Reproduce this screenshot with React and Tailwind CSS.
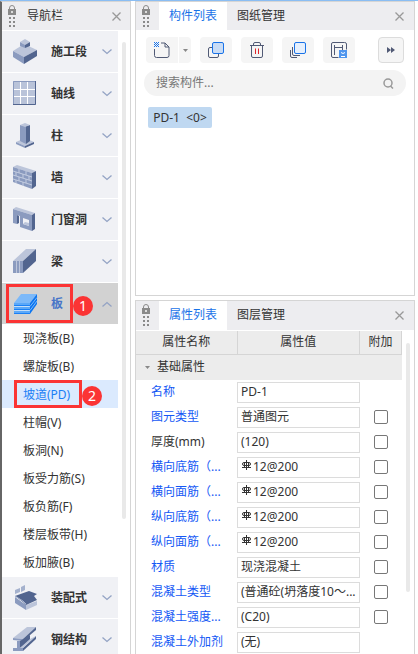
import { useState } from "react";
import clsx from "clsx";

const SectionIcon = () => (
  <>
    <path d="M0 12 11 5 24 11 11 18Z" fill="#bcc5da" />
    <path d="M0 12 11 18V25L0 18Z" fill="#8b9bbf" />
    <path d="M11 18 24 11V17L11 25Z" fill="#52658f" />
    <path d="M7 3 12 0 17 3 12 6Z" fill="#bcc5da" />
    <path d="M7 3 12 6V9L7 7Z" fill="#8b9bbf" />
    <path d="M12 6 17 3V7L12 9Z" fill="#52658f" />
  </>
);

const GridIcon = () => (
  <>
    <path d="M0 0H23V24H0Z" fill="#b9c3d9" />
    <path d="M0.500 24V0.500H23" fill="none" stroke="#8b9bbf" />
    <path d="M0 23.500H22.500V0" fill="none" stroke="#52658f" />
    <path d="M7.500 1V23M14.500 1V23M1 8.500H22M1 15.500H22" stroke="#fff" />
  </>
);

const ColumnIcon = () => (
  <>
    <path d="M3 19 12 15 21 19 12 23Z" fill="#bcc5da" />
    <path d="M3 19 12 23V25L3 21Z" fill="#8b9bbf" />
    <path d="M12 23 21 19V21L12 25Z" fill="#52658f" />
    <path d="M7 2 13 3V21L7 18Z" fill="#8b9bbf" />
    <path d="M13 3 17 2V18L13 21Z" fill="#52658f" />
    <path d="M7 2 12 0 17 2 12 4Z" fill="#bcc5da" />
  </>
);

const WallIcon = () => (
  <>
    <path d="M0 2 4 0 23 6 19 8Z" fill="#bcc5da" />
    <path d="M19 8 23 6V21L19 24Z" fill="#52658f" />
    <path d="M0 2 19 8V24L0 17Z" fill="#8b9bbf" />
    <path
      d="M0 6 19 12M0 10 19 16M0 14 19 20M6 4V8M13 6V10M3 7V11M10 9V13M16 11V15M6 12V16M13 14V18M3 15V18M10 17V21"
      fill="none"
      stroke="#c3cce0"
    />
  </>
);

const DoorIcon = () => (
  <>
    <path d="M0 2 3 0 22 6 19 8Z" fill="#bcc5da" />
    <path d="M19 8 22 6V22L19 24Z" fill="#52658f" />
    <path
      fillRule="evenodd"
      d="M0 2 19 8V24L7 20V9L4 8V17L0 16ZM10 11V17L16 19V13Z"
      fill="#8b9bbf"
    />
    <path d="M4 8 6 9V16L4 17Z" fill="#52658f" />
    <path d="M10 17 12 15 16 16V19Z" fill="#bcc5da" />
  </>
);

const BeamIcon = () => (
  <>
    <path d="M0 12 13 0H23L10 12Z" fill="#bcc5da" />
    <path d="M10 12 23 0V12L10 24Z" fill="#52658f" />
    <path d="M0 12H10V24H0Z" fill="#8b9bbf" />
    <path d="M3.500 12V24M6.500 12V24" stroke="#bcc5da" />
  </>
);

const SlabIcon = () => (
  <>
    <path d="M1 12 8 3H24L17 12Z" fill="#7cb9f9" />
    <path d="M17 12 24 3V13L17 23Z" fill="#0a74f0" />
    <path d="M1 12H17V23H1Z" fill="#5ba8f8" />
    <path d="M1 15.500H17M1 19.500H17" stroke="#c3def9" />
    <path d="M17 15.500 24 6.500M17 19.500 24 10" stroke="#7cb9f9" />
    <path d="M1 14.500H17M1 18.500H17M1 22.500H17" stroke="#1a80f5" />
  </>
);

const PrefabIcon = () => (
  <>
    <path d="M2 12 13 20V25L2 18Z" fill="#8b9bbf" />
    <path d="M13 20 24 16V20L13 25Z" fill="#bcc5da" />
    <path d="M2 11 16 6 24 9 21 11 24 15 13 20 10 17Z" fill="#52658f" />
    <path d="M2 5 7 3V7L2 9Z" fill="#a4b1cd" />
    <path d="M8 2 12 0V5L8 7Z" fill="#a4b1cd" />
    <path d="M2 11 10 16 13 19" fill="none" stroke="#a4b1cd" />
  </>
);

const SteelIcon = () => (
  <>
    <path d="M0 11 14 0H23L10 12Z" fill="#bcc5da" />
    <path d="M0 11 10 12V14L0 13Z" fill="#8b9bbf" />
    <path d="M10 12 23 0V3L10 14Z" fill="#52658f" />
    <path d="M4 14H7V21H4Z" fill="#8b9bbf" />
    <path d="M7 14 17 8V13L7 21Z" fill="#52658f" />
    <path d="M0 21H10V24H0Z" fill="#8b9bbf" />
    <path d="M10 21 23 9V12L10 24Z" fill="#52658f" />
    <path d="M7 21 17 12 23 9 10 21Z" fill="#bcc5da" />
  </>
);

const slabTypes = [
  "现浇板(B)",
  "螺旋板(B)",
  "坡道(PD)",
  "柱帽(V)",
  "板洞(N)",
  "板受力筋(S)",
  "板负筋(F)",
  "楼层板带(H)",
  "板加腋(B)",
];

const categories = [
  { name: "施工段", icon: SectionIcon },
  { name: "轴线", icon: GridIcon },
  { name: "柱", icon: ColumnIcon },
  { name: "墙", icon: WallIcon },
  { name: "门窗洞", icon: DoorIcon },
  { name: "梁", icon: BeamIcon },
  { name: "板", icon: SlabIcon, step: 1, children: slabTypes },
  { name: "装配式", icon: PrefabIcon },
  { name: "钢结构", icon: SteelIcon },
];

const properties = [
  { name: "名称", value: "PD-1", linked: true },
  { name: "图元类型", value: "普通图元", linked: true, extra: true },
  { name: "厚度(mm)", value: "(120)", extra: true },
  { name: "横向底筋（...", value: "12@200", linked: true, extra: true, rebar: true },
  { name: "横向面筋（...", value: "12@200", linked: true, extra: true, rebar: true },
  { name: "纵向底筋（...", value: "12@200", linked: true, extra: true, rebar: true },
  { name: "纵向面筋（...", value: "12@200", linked: true, extra: true, rebar: true },
  { name: "材质", value: "现浇混凝土", linked: true, extra: true },
  { name: "混凝土类型", value: "(普通砼(坍落度10～...", linked: true, extra: true },
  { name: "混凝土强度...", value: "(C20)", linked: true, extra: true },
  { name: "混凝土外加剂", value: "(无)", linked: true },
];

const Grip = () => (
  <svg width="8" height="23" viewBox="0 0 8 23" className="shrink-0" fill="#8a8a8a">
    <path d="M0 4H8V10H0Z" />
    <path d="M1.500 4V3A2.500 2.500 0 0 1 6.500 3V4" fill="none" stroke="#8a8a8a" />
    <path d="M3 6H5V8H3Z" fill="#ddd" />
    <path d="M1 12H3V14H1ZM5 12H7V14H5ZM1 16H3V18H1ZM5 16H7V18H5ZM1 20H3V22H1ZM5 20H7V22H5Z" />
  </svg>
);

const CloseButton = () => (
  <button aria-label="关闭" className="ml-auto shrink-0 p-1">
    <svg width="9" height="9" viewBox="0 0 9 9" stroke="#999" strokeWidth="1.300">
      <path d="M0.500 0.500 8.500 8.500M8.500 0.500 0.500 8.500" />
    </svg>
  </button>
);

const Step = ({ children }) => (
  <span className="absolute left-full top-1/2 -mt-2 ml-[3px] flex size-5 items-center justify-center rounded-full bg-[#fb3434] text-sm font-normal text-white">
    {children}
  </span>
);

const Category = ({ item, open, onToggle }) => {
  const Icon = item.icon;
  return (
    <button
      onClick={onToggle}
      aria-expanded={open}
      className={clsx(
        "relative mt-px flex h-[41px] w-full shrink-0 items-center pl-[11px] pr-1.5 text-left font-bold",
        open ? "bg-[#d2d2d2] text-[#4775c8]" : "bg-[#f0f1f5]"
      )}
    >
      <svg width="25" height="25" viewBox="0 0 25 25" className="mr-[13px] shrink-0">
        <Icon />
      </svg>
      {item.name}
      <svg
        width="10"
        height="6"
        viewBox="0 0 10 6"
        className={clsx("ml-auto", open && "rotate-180")}
        fill="none"
        stroke="#93a3c4"
        strokeWidth="1.300"
      >
        <path d="M0.500 0.500 5 4.500 9.500 0.500" />
      </svg>
      {item.step && (
        <span className="absolute inset-y-px left-1 w-[67px] border-3 border-[#fb3434]">
          <Step>{item.step}</Step>
        </span>
      )}
    </button>
  );
};

const Tabs = ({ tabs, className }) => (
  <div className={clsx("flex shrink-0 items-center bg-[#ededf0] pl-1.5 pr-1.5", className)}>
    <Grip />
    <div role="tablist" className="ml-[9px] flex h-full">
      {tabs.map((tab, i) => (
        <button
          key={tab}
          role="tab"
          aria-selected={i === 0}
          className={clsx("px-2.5", i === 0 && "bg-white text-[#1a73e8]")}
        >
          {tab}
        </button>
      ))}
    </div>
    <CloseButton />
  </div>
);

const ToolButton = ({ label, children, className = "w-8 rounded" }) => (
  <button
    aria-label={label}
    className={clsx("flex h-[26px] shrink-0 items-center justify-center bg-[#f5f5f5]", className)}
  >
    {children}
  </button>
);

const Toolbar = () => (
  <div className="flex items-center gap-[9px] pl-2.5 pr-2.5 pt-[7px]">
    <div className="flex gap-px">
      <ToolButton label="新建" className="w-8 rounded-l">
        <svg width="16" height="16" viewBox="0 0 16 16" fill="none" stroke="#515a75">
          <path d="M0.500 7V13.500Q0.500 15.500 2.500 15.500H13Q15 15.500 15 13.500V5L11 1H7" />
          <path d="M11 1V5H15" />
          <path d="M0 0.500H5M0 2.500H5M0 4.500H5" stroke="#1a73e8" strokeDasharray="1 1" />
          <path d="M1 1.500H5M1 3.500H5" stroke="#1a73e8" strokeDasharray="1 1" />
        </svg>
      </ToolButton>
      <ToolButton label="新建选项" className="w-3 rounded-r">
        <svg width="5" height="3" viewBox="0 0 5 3" fill="#888">
          <path d="M0 0H5L2.500 3Z" />
        </svg>
      </ToolButton>
    </div>
    <ToolButton label="复制">
      <svg width="16" height="16" viewBox="0 0 16 16" fill="none">
        <rect x="0.500" y="5.500" width="10" height="10" rx="1.500" stroke="#515a75" />
        <rect x="4.500" y="0.500" width="11" height="11" rx="1.500" fill="#c9dcf5" stroke="#1a73e8" />
      </svg>
    </ToolButton>
    <ToolButton label="删除">
      <svg width="14" height="16" viewBox="0 0 14 16" fill="none" stroke="#515a75">
        <path d="M0 3.500H14M3.500 3.500V2Q3.500 0.500 5 0.500H9Q10.500 0.500 10.500 2V3.500M1.500 3.500V14Q1.500 15.500 3 15.500H11Q12.500 15.500 12.500 14V3.500" />
        <path d="M5.500 6.500V12M8.500 6.500V12" stroke="#e0252b" />
      </svg>
    </ToolButton>
    <ToolButton label="层间复制">
      <svg width="16" height="16" viewBox="0 0 16 16" fill="none">
        <path d="M0.500 8V14Q0.500 15.500 2 15.500H7M2.500 5V12Q2.500 13.500 4 13.500H10" stroke="#515a75" />
        <rect x="4.500" y="0.500" width="11" height="11" rx="1.500" fill="#e6f0fd" stroke="#1a73e8" />
      </svg>
    </ToolButton>
    <ToolButton label="存档">
      <svg width="16" height="16" viewBox="0 0 16 16" fill="none" stroke="#515a75">
        <path d="M7.500 15.500H2Q0.500 15.500 0.500 14V2Q0.500 0.500 2 0.500H13.500Q15.500 0.500 15.500 2V7.500" />
        <path d="M3.500 3V13M3.500 5.500H11.500M11.500 3V8" />
        <path d="M8 8H16V16H8Z" fill="#4f96ee" stroke="none" />
        <path d="M10 10.500Q12 12.500 14 10.500M10 14.500H14" stroke="#fff" />
      </svg>
    </ToolButton>
    <ToolButton label="更多" className="ml-auto w-[26px] rounded border border-[#dcdcdc]">
      <svg width="8" height="6" viewBox="0 0 8 6" fill="#515a75">
        <path d="M0 0 4 3 0 6ZM4 0 8 3 4 6Z" />
      </svg>
    </ToolButton>
  </div>
);

const RebarMark = () => (
  <svg width="9" height="10" viewBox="0 0 9 10" className="mb-1 mr-0.5 shrink-0" fill="none" stroke="#333">
    <path d="M4.500 0V10M0 7.500H9M2.500 2V8M6.500 2V8" />
    <rect x="0.500" y="2.500" width="8" height="3" rx="1.500" />
  </svg>
);

const PropertyRow = ({ item, index }) => (
  <tr className="h-[25px]">
    <td className="p-0 pl-[15px]">
      <label
        htmlFor={`prop-${index}`}
        className={clsx("whitespace-nowrap", item.linked && "text-[#1458f5]")}
      >
        {item.name}
      </label>
    </td>
    <td className="p-0">
      <div className="flex h-[21px] items-center border border-[#dcdcdc] bg-white pl-0.5">
        {item.rebar && (
          <span className="ml-0.5">
            <RebarMark />
          </span>
        )}
        <input
          id={`prop-${index}`}
          defaultValue={item.value}
          className={clsx(
            "w-full min-w-0 overflow-hidden text-ellipsis bg-transparent outline-none",
            !item.rebar && "pl-px"
          )}
        />
      </div>
    </td>
    <td className="p-0 pl-[14px]">
      {item.extra && (
        <input
          type="checkbox"
          aria-label={`${item.name} 附加`}
          className="block size-3.5 appearance-none rounded-xs border border-[#777] bg-white checked:bg-[#1a73e8]"
        />
      )}
    </td>
  </tr>
);

export default function App() {
  const [openName, setOpenName] = useState("板");
  const [selected, setSelected] = useState("坡道(PD)");

  return (
    <div className="flex h-screen w-full gap-1 overflow-hidden border-t border-t-[#8abdf3] bg-white pr-[3px] font-['Noto_Sans','Noto_Sans_CJK_SC',sans-serif] text-xs text-[#333]">
      <aside className="flex w-[131px] shrink-0 flex-col border-l-2 border-r border-t border-l-[#666] border-r-[#d5d5d5] border-t-[#d5d5d5]">
        <div className="flex h-7 shrink-0 items-center bg-[#ededf0] pl-1.5 pr-[5px]">
          <Grip />
          <h2 className="ml-[11px]">导航栏</h2>
          <CloseButton />
        </div>
        <div className="flex min-h-0 flex-1">
          <nav className="flex min-w-0 flex-1 flex-col overflow-hidden">
            {categories.map((item) => (
              <div key={item.name} className="shrink-0">
                <Category
                  item={item}
                  open={openName === item.name}
                  onToggle={() => setOpenName(openName === item.name ? "" : item.name)}
                />
                {openName === item.name &&
                  item.children?.map((child) => (
                    <button
                      key={child}
                      onClick={() => setSelected(child)}
                      className={clsx(
                        "relative flex h-7 w-full items-center pl-[21px] pt-px",
                        selected === child && "bg-[#dbeafe] text-[#1a80f5]"
                      )}
                    >
                      {child}
                      {child === "坡道(PD)" && (
                        <span className="absolute inset-y-0 left-3 w-[68px] border-3 border-[#fb3434]">
                          <Step>2</Step>
                        </span>
                      )}
                    </button>
                  ))}
              </div>
            ))}
          </nav>
          <div className="flex w-3 justify-center pt-3">
            <div className="h-[78%] w-1 rounded-full bg-[#e9e9e9]" />
          </div>
        </div>
      </aside>

      <main className="flex min-w-0 flex-1 flex-col gap-1">
        <section className="flex min-h-0 flex-[294] flex-col border border-[#d5d5d5]">
          <Tabs tabs={["构件列表", "图纸管理"]} className="h-7" />
          <Toolbar />
          <label className="mx-2 mt-[7px] flex h-[26px] shrink-0 items-center rounded-full bg-[#f3f3f3] pl-3 pr-3">
            <input
              type="search"
              aria-label="搜索构件"
              placeholder="搜索构件..."
              className="min-w-0 flex-1 bg-transparent outline-none placeholder:text-[#777]"
            />
            <svg width="11" height="11" viewBox="0 0 11 11" fill="none" stroke="#999" strokeWidth="1.500">
              <circle cx="5" cy="5" r="4" />
              <path d="M7.500 8 10 10.500" />
            </svg>
          </label>
          <button className="ml-3 mt-[11px] h-[21px] min-w-16 self-start whitespace-pre rounded-xs bg-[#bfd8f1] px-[3px]">
            {"PD-1  <0>"}
          </button>
        </section>

        <section className="flex min-h-0 flex-[355] flex-col overflow-hidden border border-b-0 border-[#d5d5d5]">
          <Tabs tabs={["属性列表", "图层管理"]} className="h-[29px]" />
          <div className="flex min-h-0 flex-1 pt-px">
            <div className="min-w-0 flex-1 overflow-hidden">
              <table className="w-full table-fixed border-collapse">
                <colgroup>
                  <col className="w-[101px]" />
                  <col />
                  <col className="w-[42px]" />
                </colgroup>
                <thead>
                  <tr className="h-6 border-b border-[#d5d5d5] bg-[#ececec]">
                    <th className="border-r border-[#d5d5d5] p-0 font-normal">属性名称</th>
                    <th className="border-r border-[#d5d5d5] p-0 font-normal">属性值</th>
                    <th className="border-r border-[#d5d5d5] p-0 font-normal">附加</th>
                  </tr>
                </thead>
                <tbody>
                  <tr className="h-[25px] bg-[#ececec]">
                    <td colSpan={3} className="p-0 pl-[9px]">
                      <button className="flex items-center gap-[7px]">
                        <svg width="5" height="3" viewBox="0 0 5 3" fill="#888">
                          <path d="M0 0H5L2.500 3Z" />
                        </svg>
                        基础属性
                      </button>
                    </td>
                  </tr>
                  {properties.map((item, index) => (
                    <PropertyRow key={item.name} item={item} index={index} />
                  ))}
                </tbody>
              </table>
            </div>
            <div className="flex w-3 justify-center pt-3">
              <div className="h-[80%] w-1 rounded-full bg-[#e9e9e9]" />
            </div>
          </div>
        </section>
      </main>
    </div>
  );
}
